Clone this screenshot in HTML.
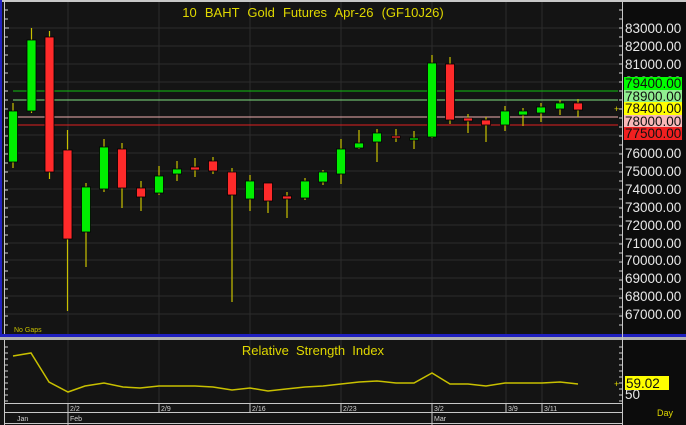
<!DOCTYPE html>
<html><head><meta charset="utf-8"><style>
html,body{margin:0;padding:0;background:#141414;}
svg{display:block;font-family:"Liberation Sans",sans-serif;}
</style></head><body>
<svg width="686" height="425" viewBox="0 0 686 425" xmlns="http://www.w3.org/2000/svg">
<rect width="686" height="425" fill="#141414"/>
<rect x="622" y="0" width="64" height="425" fill="#0c0c0c"/>
<rect x="0" y="0" width="686" height="2" fill="#c8c8c8"/>
<rect x="0" y="0" width="2" height="337" fill="#2020c0"/>
<rect x="0" y="334" width="686" height="3" fill="#2020c0"/>
<rect x="0" y="337" width="686" height="3" fill="#b0b0b0"/>
<line x1="622.5" y1="2" x2="622.5" y2="425" stroke="#c8c8c8"/>
<line x1="4.5" y1="2" x2="4.5" y2="334" stroke="#c8c8c8"/>
<line x1="4.5" y1="340" x2="4.5" y2="425" stroke="#c8c8c8"/>
<g stroke="#2c2c2c" stroke-width="1">
<line x1="5" y1="28" x2="622" y2="28"/><line x1="5" y1="46" x2="622" y2="46"/><line x1="5" y1="64" x2="622" y2="64"/><line x1="5" y1="82" x2="622" y2="82"/><line x1="5" y1="135" x2="622" y2="135"/><line x1="5" y1="153" x2="622" y2="153"/><line x1="5" y1="171" x2="622" y2="171"/><line x1="5" y1="189" x2="622" y2="189"/><line x1="5" y1="207" x2="622" y2="207"/><line x1="5" y1="225" x2="622" y2="225"/><line x1="5" y1="243" x2="622" y2="243"/><line x1="5" y1="260" x2="622" y2="260"/><line x1="5" y1="278" x2="622" y2="278"/><line x1="5" y1="296" x2="622" y2="296"/><line x1="5" y1="314" x2="622" y2="314"/>
<line x1="68" y1="2" x2="68" y2="334"/><line x1="159" y1="2" x2="159" y2="334"/><line x1="250" y1="2" x2="250" y2="334"/><line x1="341" y1="2" x2="341" y2="334"/><line x1="432" y1="2" x2="432" y2="334"/><line x1="506" y1="2" x2="506" y2="334"/><line x1="542" y1="2" x2="542" y2="334"/>
<line x1="68" y1="340" x2="68" y2="403"/><line x1="159" y1="340" x2="159" y2="403"/><line x1="250" y1="340" x2="250" y2="403"/><line x1="341" y1="340" x2="341" y2="403"/><line x1="432" y1="340" x2="432" y2="403"/><line x1="506" y1="340" x2="506" y2="403"/><line x1="542" y1="340" x2="542" y2="403"/>
</g>
<g stroke="#d0d0d0">
<path d="M5 10h3M5 19h3M5 28h4M5 37h3M5 46h3M5 55h3M5 64h3M5 73h3M5 82h3M5 91h3M5 100h3M5 109h3M5 118h3M5 127h3M5 136h3M5 145h3M5 154h3M5 163h3M5 172h3M5 181h3M5 190h3M5 199h3M5 208h3M5 217h3M5 226h3M5 235h3M5 244h3M5 253h3M5 262h3M5 271h3M5 280h3M5 289h3M5 298h3M5 307h3M5 316h3M5 325h3"/>
<path d="M5 347h3M5 353h3M5 359h3M5 365h3M5 371h3M5 377h3M5 383h3M5 389h3M5 395h3M5 401h3"/>
<path d="M619 10h3M619 19h3M619 28h3M619 37h3M619 46h3M619 55h3M619 64h3M619 73h3M619 82h3M619 91h3M619 100h3M619 109h3M619 118h3M619 127h3M619 136h3M619 145h3M619 154h3M619 163h3M619 172h3M619 181h3M619 190h3M619 199h3M619 208h3M619 217h3M619 226h3M619 235h3M619 244h3M619 253h3M619 262h3M619 271h3M619 280h3M619 289h3M619 298h3M619 307h3M619 316h3M619 325h3"/>
<path d="M619 347h3M619 353h3M619 359h3M619 365h3M619 371h3M619 377h3M619 383h3M619 389h3M619 395h3M619 401h3"/>
</g>
<line x1="13" y1="91" x2="618" y2="91" stroke="#10c010"/>
<line x1="13" y1="100" x2="618" y2="100" stroke="#80e080"/>
<line x1="13" y1="117" x2="618" y2="117" stroke="#f0b0b0"/>
<line x1="13" y1="125" x2="618" y2="125" stroke="#e02020"/>
<g stroke="#c8c000" stroke-width="1.2">
<path d="M13 103V168M31.5 28V113M49.5 31V179M67.5 130V311M86 183V267M104 139V192M122 143V208M141 181V211M159 166V195M177 161V181M195 158V177M213 157V174M232 168V302M250 175V211M268 183V213M287 192V218M305 178V200M323 170V185M341 139V184M359 130V149M377 129V162M396 129V142M414 131V149M432 55V138M450 57V124M468 114V133M486 117V142M505 106V131M523 108V126M541 103V122M560 100V115M578 99V117"/>
</g>
<g fill="#00ee00" stroke="#000" stroke-width="0.8">
<rect x="8.5" y="111" width="9" height="51"/><rect x="27" y="40" width="9" height="71"/><rect x="81.5" y="187" width="9" height="45"/><rect x="99.5" y="147" width="9" height="42"/><rect x="154.5" y="176" width="9" height="17"/><rect x="172.5" y="169" width="9" height="5"/><rect x="245.5" y="181" width="9" height="18"/><rect x="300.5" y="181" width="9" height="17"/><rect x="318.5" y="172" width="9" height="10"/><rect x="336.5" y="149" width="9" height="25"/><rect x="354.5" y="143" width="9" height="5"/><rect x="372.5" y="133" width="9" height="9"/><rect x="409.5" y="138" width="9" height="2"/><rect x="427.5" y="63" width="9" height="74"/><rect x="500.5" y="111" width="9" height="14"/><rect x="518.5" y="111" width="9" height="4"/><rect x="536.5" y="107" width="9" height="6"/><rect x="555.5" y="103" width="9" height="6"/>
</g>
<g fill="#ff2a2a" stroke="#000" stroke-width="0.8">
<rect x="45" y="37" width="9" height="135"/><rect x="63" y="150" width="9" height="89"/><rect x="117.5" y="149" width="9" height="39"/><rect x="136.5" y="188" width="9" height="9"/><rect x="190.5" y="167" width="9" height="3"/><rect x="208.5" y="161" width="9" height="10"/><rect x="227.5" y="172" width="9" height="23"/><rect x="263.5" y="183" width="9" height="18"/><rect x="282.5" y="196" width="9" height="3"/><rect x="391.5" y="136" width="9" height="2"/><rect x="445.5" y="64" width="9" height="56"/><rect x="463.5" y="118" width="9" height="3"/><rect x="481.5" y="120" width="9" height="5"/><rect x="573.5" y="103" width="9" height="7"/>
</g>
<text x="313" y="17" fill="#e0d800" font-size="13" text-anchor="middle" word-spacing="4.5">10 BAHT Gold Futures Apr-26 (GF10J26)</text>
<text x="14" y="332" fill="#c8c000" font-size="7">No Gaps</text>
<g fill="#e8e8e8" font-size="13.5">
<text x="625" y="33">83000.00</text><text x="625" y="51">82000.00</text><text x="625" y="69">81000.00</text><text x="625" y="86">80000.00</text><text x="625" y="158">76000.00</text><text x="625" y="176">75000.00</text><text x="625" y="194">74000.00</text><text x="625" y="212">73000.00</text><text x="625" y="230">72000.00</text><text x="625" y="248">71000.00</text><text x="625" y="265">70000.00</text><text x="625" y="283">69000.00</text><text x="625" y="301">68000.00</text><text x="625" y="319">67000.00</text>
</g>
<rect x="624" y="77" width="58" height="13" fill="#00ff00"/><rect x="624" y="90" width="58" height="12" fill="#90ee90"/><rect x="624" y="102" width="58" height="13" fill="#ffff00"/><rect x="624" y="115" width="58" height="12" fill="#f8b8b8"/><rect x="624" y="127" width="58" height="13" fill="#f02020"/>
<g fill="#101010" font-size="13.5">
<text x="625" y="88">79400.00</text><text x="625" y="101">78900.00</text><text x="625" y="113">78400.00</text><text x="625" y="126">78000.00</text><text x="625" y="138">77500.00</text>
</g>
<text x="614" y="112" fill="#e0d800" font-size="9">+</text>
<text x="313" y="355" fill="#e0d800" font-size="13" text-anchor="middle" word-spacing="3.5">Relative Strength Index</text>
<polyline fill="none" stroke="#c8c000" stroke-width="1.5" points="13,356 31,353 49,382 68,392 85,386 104,383 123,387 140,388 159,386 177,386 195,386 213,387 232,390 250,388 268,391 286,389 305,387 323,386 341,384 359,382 377,381 396,383 414,383 432,373 450,384 468,384 486,386 505,383 523,383 542,383 560,382 578,384"/>
<text x="625" y="399" fill="#e8e8e8" font-size="13.5">50</text>
<rect x="625" y="376" width="44" height="14" fill="#ffff00"/>
<text x="626" y="388" fill="#101010" font-size="13.5">59.02</text>
<text x="614" y="387" fill="#e0d800" font-size="9">+</text>
<text x="657" y="416" fill="#e0d800" font-size="9">Day</text>
<g stroke="#c8c8c8">
<line x1="5" y1="403.5" x2="622" y2="403.5"/><line x1="5" y1="412.5" x2="622" y2="412.5"/><line x1="5" y1="423.5" x2="622" y2="423.5"/>
<path d="M68 403V425M159 403V412M250 403V412M341 403V412M432 403V425M506 403V412M542 403V412"/>
</g>
<g fill="#d0d0d0" font-size="7">
<text x="70" y="411">2/2</text><text x="161" y="411">2/9</text><text x="252" y="411">2/16</text><text x="343" y="411">2/23</text><text x="434" y="411">3/2</text><text x="508" y="411">3/9</text><text x="544" y="411">3/11</text>
<text x="17" y="421">Jan</text><text x="70" y="421">Feb</text><text x="434" y="421">Mar</text>
</g>
</svg>
</body></html>
